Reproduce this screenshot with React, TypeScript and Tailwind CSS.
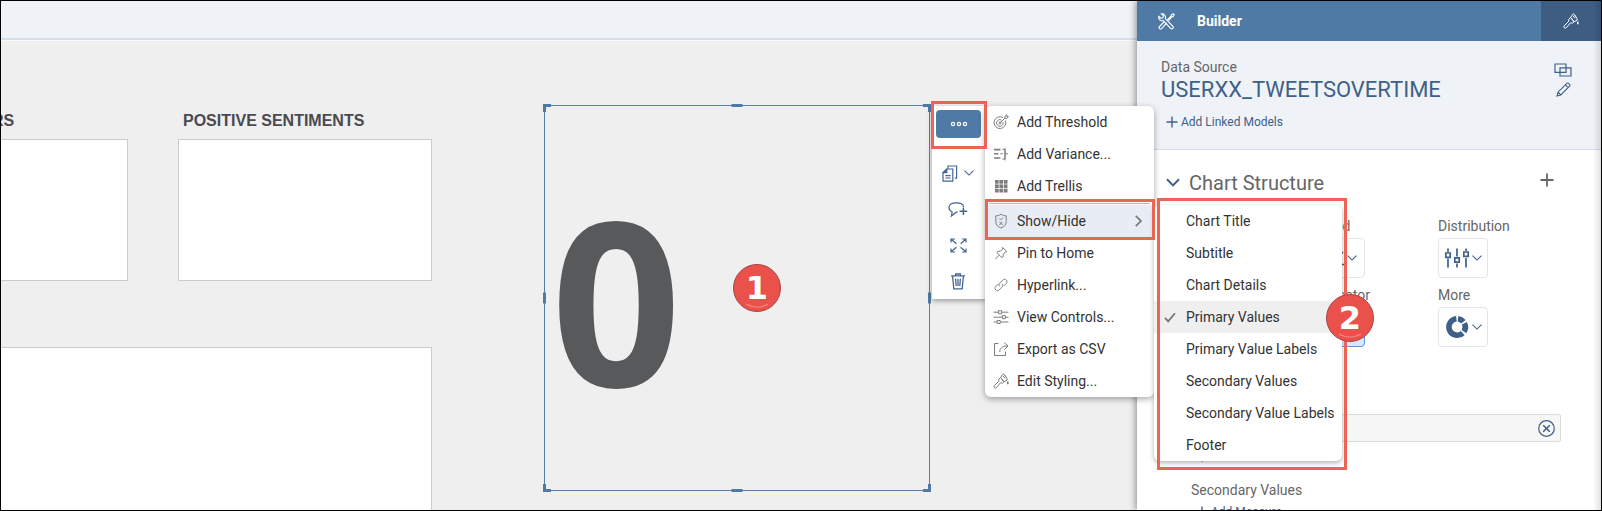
import type { ReactNode } from "react";

type IconProps = { className?: string; w?: number; h?: number; sw?: number; children?: ReactNode };

function Icon({ className = "", w = 16, h = 16, sw = 1, children }: IconProps) {
  return (
    <svg
      className={`shrink-0 ${className}`}
      width={w}
      height={h}
      viewBox={`0 0 ${w} ${h}`}
      fill="none"
      stroke="currentColor"
      strokeWidth={sw}
      aria-hidden="true"
    >
      {children}
    </svg>
  );
}

const Chevron = ({ className = "" }: { className?: string }) => (
  <Icon w={10} h={6} sw={1.1} className={className}>
    <path d="M.5 .7 5 5.1 9.5 .7" />
  </Icon>
);

const Plus = ({ size = 12, sw = 1.4 }: { size?: number; sw?: number }) => (
  <Icon w={size} h={size} sw={sw}>
    <path d={`M${size / 2} .5v${size - 1}M.5 ${size / 2}h${size - 1}`} />
  </Icon>
);

const Brush = () => (
  <Icon>
    <path d="M7.6 4.4 9.6 1.6 10.2 .8 11.4 1.6 14 5.4 14.2 7 12.4 8.2 11 8.8z" />
    <path d="M7.6 4.4 11 8.8 9.4 10.2 7.6 9.8 3.4 14.6C2 15.8 .2 14.4 1.2 12.8L5.8 8.2 5.8 6.2z" />
    <path d="M10.2 3 12 5.4M11.6 2.2 13 4.2" />
    <path d="M14.8 8.4v2.8" strokeWidth="1.6" />
  </Icon>
);

const Threshold = () => (
  <Icon>
    <path d="M10 3.6A5.9 5.9 0 1 0 12.4 6.4" />
    <path d="M8.4 6A3.3 3.3 0 1 0 10 7.8" />
    <circle cx="7" cy="9" r="1" />
    <path d="M7.2 8.8 12 4V2.2L13.8 .8V2.6H15.4L14 4.4H12.2" />
  </Icon>
);

const Variance = () => (
  <Icon>
    <path d="M1 3.6h6.4M1 7.8h4.4M1 12h6.4" strokeWidth="1.6" />
    <path d="M7.4 7.8h2.4M9.4 3.4h2.6v9.6H9.4M12 2v12.4M12 7.8h3" />
  </Icon>
);

const Trellis = () => (
  <Icon>
    <g fill="currentColor" stroke="none">
      {[2, 6.4, 10.8].map((y) =>
        [2, 6.4, 10.8].map((x) => <rect key={`${x}-${y}`} x={x} y={y} width="3.7" height="3.7" />),
      )}
    </g>
  </Icon>
);

const Shield = () => (
  <Icon>
    <path d="M8 1.2C6.4 2.4 4.6 2.8 2.8 2.8V8.6C2.8 11.8 5 13.8 8 15 11 13.8 13.2 11.8 13.2 8.6V2.8C11.4 2.8 9.6 2.4 8 1.2z" />
    <path d="M6.2 5.6 7.6 7 10 4.4M6.4 8.8 9.6 12M9.6 8.8 6.4 12" />
  </Icon>
);

const Pin = () => (
  <Icon>
    <path d="M9.6 2.4 13.8 6.6 12.4 6.8 10.4 9 10 12 8.6 12.4 4 7.8 4.6 6.4 7.6 6 9.6 4z" />
    <path d="M6.2 10.2 2.4 14" />
  </Icon>
);

const LinkIcon = () => (
  <Icon>
    <path d="M7 9.4C5.8 8.2 6 6.8 6.8 6L9.8 3C11 1.8 12.4 2.2 13.2 3 14.2 4 14.2 5.4 13.2 6.4L10.6 9" />
    <path d="M8.8 6.8C10 8 9.8 9.4 9 10.2L6.2 13C5 14.2 3.6 13.8 2.8 13 1.8 12 1.8 10.6 2.8 9.6L5.4 7" />
  </Icon>
);

const Controls = () => (
  <Icon>
    <path d="M.5 3.2h5M8.6 3.2h6.9M.5 8.2h8.8M12.4 8.2h3.1M.5 13h3.7M7.2 13h8.3" />
    <path d="M5.6 1.7h3v3h-3zM9.4 6.7h3v3h-3zM4.2 11.5h3v3h-3z" />
  </Icon>
);

const Export = () => (
  <Icon>
    <path d="M5.4 2.5H1.5V14.5H12.5V10.5" />
    <path d="M6.8 11C6.8 7.4 8.6 5.2 14.4 5M11.4 1.6 15 5 11.4 8.6" />
  </Icon>
);

const Tools = () => (
  <Icon w={17} h={17} sw={1.1}>
    <path d="M3.4 .9 5.4 2.9 4.8 4.8 3 5.4 .9 3.4C.4 5.2 1.2 7.2 3.2 7.7L5.2 7.6 12.6 15.4C14 16.8 16.2 14.8 14.9 13.4L7.4 5.6C8 2.8 6 .4 3.4 .9z" />
    <path d="M9.4 6.8 13 3.2 13.4 1.8 15.2 .8 16.2 1.8 15.2 3.6 13.8 4 10.4 7.6M7.6 9.6 8.2 10.4 3.6 15.6C2.2 16.8 .2 14.8 1.5 13.5L6 9" />
  </Icon>
);

function Badge({ n, className }: { n: number; className: string }) {
  return (
    <span
      className={`pointer-events-none absolute z-30 flex size-12 items-center justify-center rounded-full border border-[#a8474b] bg-[#e9514a] font-['DejaVu_Sans',sans-serif] text-[32px] leading-none font-bold text-white ${className}`}
    >
      {n}
      <svg className="absolute bottom-[2px] left-[11px]" width="24" height="6" viewBox="0 0 24 6" fill="none" aria-hidden="true">
        <path d="M1 1.2Q12 7 23 1.2" stroke="#f2837c" strokeWidth="1.4" />
      </svg>
    </span>
  );
}

const Outline = ({ className }: { className: string }) => (
  <span className={`pointer-events-none absolute z-10 border-3 border-[#ec6453] ${className}`} />
);

function MenuItem({ icon, label, children, active }: { icon?: ReactNode; label: string; children?: ReactNode; active?: boolean }) {
  return (
    <li className={active ? "relative bg-[#e8edf5]" : "relative"}>
      <button type="button" className="flex h-8 w-full items-center gap-2 px-2 text-left">
        <span className="text-[#7d7d7d]">{icon}</span>
        <span className="flex-1 whitespace-nowrap">{label}</span>
        {active && (
          <Icon w={7} h={12} sw={1.8} className="mr-1 text-[#7d7d7d]">
            <path d="M.8 .8 6 6 .8 11.2" />
          </Icon>
        )}
      </button>
      {children}
    </li>
  );
}

const partItems = [
  "Chart Title",
  "Subtitle",
  "Chart Details",
  "Primary Values",
  "Primary Value Labels",
  "Secondary Values",
  "Secondary Value Labels",
  "Footer",
];

function ShowHideMenu() {
  return (
    <div className="absolute top-0 left-full w-[188px]">
      <ul className="rounded-md bg-white shadow-[0_2px_5px_rgba(0,0,0,0.3)]">
        {partItems.map((label) => {
          const checked = label === "Primary Values";
          return (
            <li key={label} className={checked ? "bg-[#efefef]" : ""}>
              <button type="button" className="flex h-8 w-full items-center text-left whitespace-nowrap">
                <span className="flex w-8 justify-center text-[#777]">
                  {checked && (
                    <Icon w={12} h={11} sw={1.8}>
                      <path d="M1 5.8 4.2 9.4 11 1.2" />
                    </Icon>
                  )}
                </span>
                {label}
              </button>
            </li>
          );
        })}
      </ul>
      <Outline className="-top-[7px] -right-[5px] -bottom-[9px] left-[3px]" />
      <Badge n={2} className="top-[89px] -right-8" />
    </div>
  );
}

function ActionMenu() {
  return (
    <ul className="absolute top-0 left-[440px] w-[169px] rounded-md bg-white shadow-[0_2px_6px_rgba(0,0,0,0.35)]">
      <MenuItem icon={<Threshold />} label="Add Threshold" />
      <MenuItem icon={<Variance />} label="Add Variance..." />
      <MenuItem icon={<Trellis />} label="Add Trellis" />
      <li role="separator" className="mx-1 my-px h-px bg-[#b5b5b5]" />
      <MenuItem icon={<Shield />} label="Show/Hide" active>
        <Outline className="-top-[6px] -right-px -bottom-[3px] left-0" />
        <ShowHideMenu />
      </MenuItem>
      <MenuItem icon={<Pin />} label="Pin to Home" />
      <MenuItem icon={<LinkIcon />} label="Hyperlink..." />
      <MenuItem icon={<Controls />} label="View Controls..." />
      <MenuItem icon={<Export />} label="Export as CSV" />
      <MenuItem icon={<Brush />} label="Edit Styling..." />
    </ul>
  );
}

function WidgetToolbar() {
  const item = "flex h-9 w-full items-center justify-center gap-1 pr-[2px]";
  return (
    <div className="absolute top-0 left-[387px] w-[54px] bg-white pt-1 text-[#44658f] shadow-[0_2px_5px_rgba(0,0,0,0.35)]">
      <Outline className="-top-[5px] -left-px h-12 w-14" />
      <button type="button" aria-label="More actions" className="mb-[17px] ml-1 flex h-7 w-[45px] items-center justify-center rounded-[4px] bg-[#4f7aa6] text-white">
        <Icon w={18} h={6} sw={1.2}>
          <circle cx="3" cy="3" r="1.6" />
          <circle cx="9" cy="3" r="1.6" />
          <circle cx="15" cy="3" r="1.6" />
        </Icon>
      </button>
      <button type="button" aria-label="Copy" className="flex h-9 w-full items-center justify-center gap-[6px] pr-[2px]">
        <Icon w={16} h={17} sw={1.2}>
          <path d="M4.8 4H10.8V16.2H1V7.6z" />
          <path d="M1.4 7.6H4.8V4.2z" fill="currentColor" />
          <path d="M6 3.8V1H14.6V13.2H12.8" />
          <path d="M3.4 10.6H8.6M3.4 13H8.6" />
        </Icon>
        <Chevron />
      </button>
      <button type="button" aria-label="Add comment" className={item}>
        <Icon w={20} h={17} sw={1.2}>
          <path d="M15.6 5.8C15.2 3 13 1.8 8.6 1.8 3.4 1.8 1 3.4 1 6.6 1 9 2.2 10.2 4.2 11L3.4 15 8.2 11.2H9.6" />
          <path d="M15.4 6.6V14M11.6 10.3H19.2" strokeWidth="1.5" />
        </Icon>
      </button>
      <button type="button" aria-label="Fullscreen" className={item}>
        <Icon w={17} h={15} sw={1.2}>
          <path d="M1 4.6V1H5M1.2 1.2 6.4 5.8M12 1H16V4.6M15.8 1.2 10.6 5.8M1 10.4V14H5M1.2 13.8 6.4 9.2M12 14H16V10.4M15.8 13.8 10.6 9.2" />
        </Icon>
      </button>
      <button type="button" aria-label="Delete" className={item}>
        <Icon w={14} h={17} sw={1.3}>
          <path d="M0 2.8H14M4.6 2.6V1H9.4V2.6M1.6 3 2.8 15.8H11.2L12.4 3M4.6 5.8 5.2 13M7 5.8V13M9.4 5.8 8.8 13" />
        </Icon>
      </button>
    </div>
  );
}

const handles = [
  "-top-[2px] -left-[2px] h-2 w-2 border-t-3 border-l-3",
  "-top-[2px] -right-[2px] h-2 w-2 border-t-3 border-r-3",
  "-bottom-[2px] -left-[2px] h-2 w-2 border-b-3 border-l-3",
  "-bottom-[2px] -right-[2px] h-2 w-2 border-b-3 border-r-3",
  "-top-[2px] left-1/2 w-[11px] -translate-x-1/2 border-t-3",
  "-bottom-[2px] left-1/2 w-[11px] -translate-x-1/2 border-t-3",
  "top-1/2 -left-[2px] h-[11px] -translate-y-1/2 border-l-3",
  "top-1/2 -right-[2px] h-[11px] -translate-y-1/2 border-l-3",
];

function SelectedChart() {
  return (
    <section className="relative z-20 mt-[64px] size-[386px] shrink-0 border border-[#5580ab]">
      {handles.map((h) => (
        <span key={h} className={`absolute border-[#4f7aa6] ${h}`} />
      ))}
      <div className="flex h-full items-center pt-[2px] pl-[6px] font-['Open_Sans',sans-serif] text-[228px] leading-none font-bold text-[#58595b]">
        0
      </div>
      <Badge n={1} className="top-[158px] left-[188px]" />
      <WidgetToolbar />
      <ActionMenu />
    </section>
  );
}

function Tile({ title, className }: { title: string; className: string }) {
  return (
    <section className={className}>
      <h2 className="flex h-8 items-center px-[5px] text-[16px] font-bold whitespace-nowrap text-[#4a4a52]">{title}</h2>
      <div className="mt-[2px] h-[142px] border border-[#cccccc] bg-white" />
    </section>
  );
}

function TypeButton({ label, icon, selected, className = "" }: { label: string; icon: ReactNode; selected?: boolean; className?: string }) {
  return (
    <div className={className}>
      <div className="flex h-6 items-center">{label}</div>
      <button
        type="button"
        aria-label={label}
        className={`flex h-10 w-[50px] items-center justify-center gap-[2px] rounded-[4px] border text-[#3f6088] ${
          selected ? "border-[#5b96d6] bg-[#d8e7f7]" : "border-[#e5e5e5] bg-white"
        }`}
      >
        {icon}
        <Chevron />
      </button>
    </div>
  );
}

const AddLink = ({ label }: { label: string }) => (
  <button type="button" className="flex h-5 items-center gap-[3px] text-[12px] text-[#3f6088]">
    <Plus />
    {label}
  </button>
);

function BuilderPanel() {
  return (
    <aside className="relative w-[464px] shrink-0 bg-white text-[14px] text-[#666] shadow-[-2px_0_6px_rgba(0,0,0,0.35)]">
      <header className="flex h-10 bg-[#4f7aa6] text-white">
        <div className="flex flex-1 items-center gap-[22px] pl-[21px] font-bold">
          <Tools />
          Builder
        </div>
        <button type="button" aria-label="Styling" className="flex w-[60px] items-center justify-center bg-[#3d5d83]">
          <Brush />
        </button>
      </header>

      <section className="flex h-[109px] justify-between border-b border-[#d3dfec] bg-[#eff3f8] pt-4 pr-[29px] pl-6">
        <div>
          <div className="leading-5">Data Source</div>
          <div className="pt-px text-[22px] leading-6 text-[#3f6088]">USERXX_TWEETSOVERTIME</div>
          <div className="mt-[10px] pl-[5px]">
            <AddLink label="Add Linked Models" />
          </div>
        </div>
        <div className="flex flex-col items-center gap-[5px] pt-[6px] text-[#3f6088]">
          <button type="button" aria-label="Change data source">
            <Icon w={18} h={14} sw={1.2} className="block">
              <path d="M1 1H12V9.4H1zM6 4.8H17V13H6z" />
            </Icon>
          </button>
          <button type="button" aria-label="Edit data source">
            <Icon w={15} h={15} sw={1.1} className="block">
              <path d="M1 14 2 10.2 10.8 1.4C12.2 .2 14.8 2.8 13.6 4.2L4.8 13zM9.4 2.8 12.2 5.6M2 10.2 4.8 13" />
            </Icon>
          </button>
        </div>
      </section>

      <section className="pr-10 pl-[29px]">
        <div className="flex h-[64px] items-center gap-[9px]">
          <Icon w={14} h={9} sw={2} className="text-[#3f6088]">
            <path d="M1 1.2 7 7.4 13 1.2" />
          </Icon>
          <h2 className="flex-1 pt-[2px] text-[20px]">Chart Structure</h2>
          <button type="button" aria-label="Add structure" className="mr-[7px] pb-1">
            <Plus size={14} sw={1.8} />
          </button>
        </div>
        <div className="grid grid-cols-3 gap-y-[5px] pl-[26px]">
          <TypeButton
            label="Trend"
            className="col-start-2"
            icon={
              <Icon w={22} h={20} sw={1.6}>
                <path d="M1 1V16.5H21.5M3 14 9 7 13 11 20 4" />
              </Icon>
            }
          />
          <TypeButton
            label="Distribution"
            icon={
              <Icon w={26} h={20} sw={1.7}>
                <path d="M4 .5V4M4 10.5V19.5M13 .5V8.5M13 15.5V19.5M22 .5V3M22 10V19.5" />
                <path d="M1.8 5H6.2V9.4H1.8zM10.8 9.8H15.2V14.2H10.8zM19.8 4H24.2V8.4H19.8z" />
              </Icon>
            }
          />
          <TypeButton
            label="Indicator"
            selected
            className="col-start-2"
            icon={
              <Icon w={22} h={20} sw={1.6}>
                <path d="M1 10H21" />
              </Icon>
            }
          />
          <TypeButton
            label="More"
            icon={
              <Icon w={26} h={24} sw={5.6}>
                <path d="M12.4 3.7A8.3 8.3 0 1 0 18.8 18.1" />
                <path d="M14 3.7A8.3 8.3 0 0 1 19.4 6.7" />
                <path d="M20.4 8.2A8.3 8.3 0 0 1 20 16.6" />
              </Icon>
            }
          />
        </div>
      </section>

      <section className="pt-[67px] pr-10 pl-[54px]">
        <div className="flex h-7 items-center justify-end rounded-[2px] border border-[#dcdcdc] bg-[#f7f7f7] pr-[5px] text-[#3f6088]">
          <button type="button" aria-label="Remove measure">
            <Icon w={17} h={17} sw={1.2} className="block">
              <circle cx="8.5" cy="8.5" r="7.8" />
              <path d="M5.2 5.2 11.8 11.8M11.8 5.2 5.2 11.8" strokeWidth="1.6" />
            </Icon>
          </button>
        </div>
        <div className="flex h-[38px] items-start pt-1 pl-[5px]">
          <button type="button" aria-label="Add primary value" className="flex h-5 items-center text-[#3f6088]">
            <Plus />
          </button>
        </div>
        <div className="leading-5">Secondary Values</div>
        <div className="mt-[2px] pl-[5px]">
          <AddLink label="Add Measure" />
        </div>
      </section>
      <span className="pointer-events-none absolute inset-y-0 right-0 w-2 bg-linear-to-r from-transparent to-black/12" />
    </aside>
  );
}

export default function App() {
  return (
    <div className="flex h-screen overflow-hidden border border-black bg-[#efefef] font-[Roboto,sans-serif] text-[14px] text-[#333]">
      <main className="flex min-w-0 flex-1 flex-col">
        <div className="h-[39px] shrink-0 border-b-2 border-[#d3dfea] bg-[#eff3f8]" />
        <div className="flex min-h-0 flex-1 gap-[112px] border-t border-[#f8fafc]">
          <div className="flex w-[431px] shrink-0 flex-col gap-[66px] pt-[64px] font-['Liberation_Sans',Arial,sans-serif]">
            <div className="flex justify-between">
              <Tile title="RS" className="-ml-[14px] w-[141px]" />
              <Tile title="POSITIVE SENTIMENTS" className="w-[254px]" />
            </div>
            <div className="-ml-px flex-1 border border-b-0 border-[#cccccc] bg-white" />
          </div>
          <SelectedChart />
        </div>
      </main>
      <BuilderPanel />
    </div>
  );
}
